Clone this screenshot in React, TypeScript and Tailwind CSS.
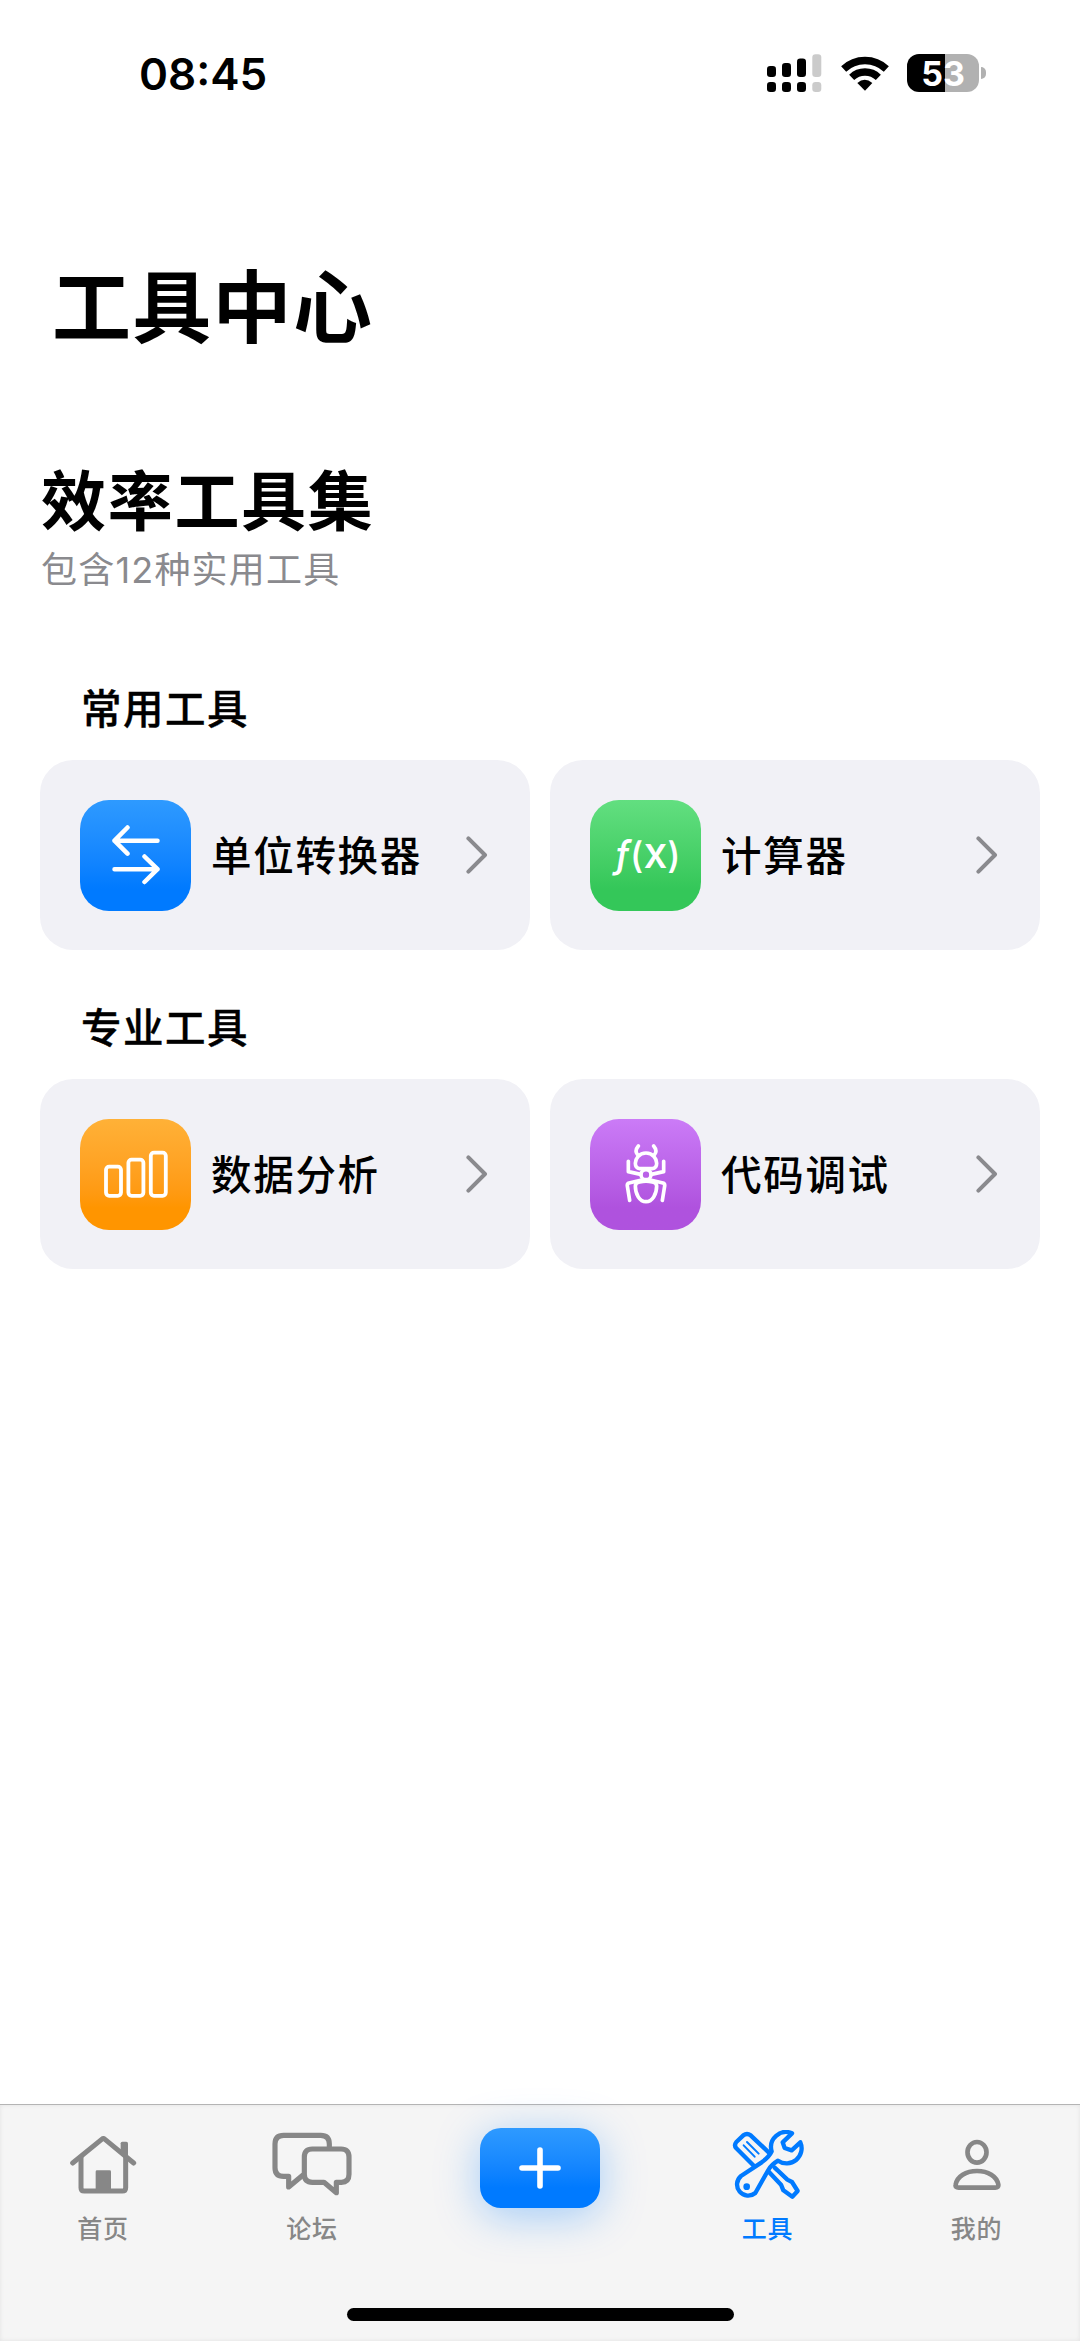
import type { ReactNode } from 'react';

type Tool = {
  name: string;
  tile: string;
  icon: ReactNode;
};

type Section = {
  title: string;
  tools: Tool[];
};

const SwapIcon = () => (
  <svg className="w-[50px] h-[60px]" viewBox="110 826 50 60" fill="none" stroke="white" strokeWidth={4.5} strokeLinecap="round" strokeLinejoin="round">
    <path d="M126.5 828.5 113.5 841.7 126.5 854.7M113.5 841.7H156.5" />
    <path d="M143.5 857.5 156.5 870.2 143.5 883M156.5 870.2H113.5" />
  </svg>
);

const FunctionIcon = () => (
  <span className="mt-[-5px] ml-[4px] flex items-baseline text-white text-[36px] leading-none font-medium">
    <span className="italic text-[38px]">ƒ</span>
    <span>(</span>
    <span className="text-[43px] leading-none">x</span>
    <span>)</span>
  </span>
);

const BarsIcon = () => (
  <svg className="w-[64px] h-[48px]" viewBox="104 1151 64 48" fill="none" stroke="white" strokeWidth={3.8}>
    <rect x="106" y="1167.6" width="15" height="29.2" rx="3.2" />
    <rect x="128.4" y="1160.6" width="15" height="36.2" rx="3.2" />
    <rect x="150.8" y="1153.6" width="15" height="43.2" rx="3.2" />
  </svg>
);

const AntIcon = () => (
  <svg className="w-[42px] h-[60px]" viewBox="253 254 126 180" fill="none" stroke="white" strokeWidth={11} strokeLinecap="round" strokeLinejoin="round">
    <path d="M293 260Q281 274 290 285M339 260Q351 274 342 285" />
    <path d="M316 281C295 281 284 298 284 312Q284 327 297 328H335Q348 327 348 312C348 298 337 281 316 281Z" />
    <circle cx="316" cy="346" r="15" />
    <path d="M284 380Q284 370 297 368Q316 363 335 368Q348 370 348 380C348 405 335 427 316 427C297 427 284 405 284 380Z" />
    <path d="M300 345 263 337V306M332 345 369 337V306" />
    <path d="M303 362 265 371Q259 373 260 380L267 423M329 362 367 371Q373 373 372 380L365 423" />
  </svg>
);

const ChevronIcon = () => (
  <svg className="w-[22px] h-[38px]" viewBox="0 0 22 38" fill="none" stroke="#8a8a8e" strokeWidth={4} strokeLinecap="round" strokeLinejoin="round">
    <path d="M2.4 2.4 19 19 2.4 35.6" />
  </svg>
);

const HomeIcon = () => (
  <svg className="w-[67px] h-[70px]" viewBox="210 120 201 210" fill="none" stroke="currentColor" strokeWidth={15} strokeLinecap="round" strokeLinejoin="round">
    <path d="M218 219 305 148Q310 144 315 148L401 219" />
    <path d="M243 202V293Q243 303 253 303H367Q377 303 377 293V202" />
    <path d="M362 190V160Q362 155 367 155H379Q384 155 384 160V205Z" fill="currentColor" stroke="none" />
    <rect x="287" y="241" width="46" height="62" rx="4" fill="currentColor" stroke="none" />
  </svg>
);

const ChatIcon = () => (
  <svg className="w-[80px] h-[70px]" viewBox="818 120 240 210" fill="none" stroke="currentColor" strokeWidth={15.5} strokeLinejoin="round">
    <path d="M990 171V162Q990 136 964 136H853Q827 136 827 162V233Q827 259 853 259H868V291L912 254" />
    <path d="M939 177H1025Q1049 177 1049 201V253Q1049 277 1026 277H1011V308L974 277H939Q915 277 915 253V201Q915 177 939 177Z" />
  </svg>
);

const ToolsIcon = () => (
  <svg className="w-[72px] h-[70px]" viewBox="96 120 216 210" fill="none" stroke="currentColor" strokeWidth={13} strokeLinecap="round" strokeLinejoin="round">
    <path d="M165 231 109 175Q101 166 109 156L130 136Q141 128 152 136L209 190" />
    <path d="M131 166 164 200M141 156 176 191" strokeWidth={6} />
    <path d="M207 246 243 284 250 301 277 320 293 303 276 276 262 269 224 233" />
    <path d="M228 250 258 281" stroke="#f5f5f5" strokeWidth={5} />
    {/* the wrench lies over the screwdriver */}
    <path
      d="M276 130A45 45 0 0 0 215 184Q208 200 185 217L123 258A31 31 0 1 0 166 309L205 240Q214 224 234 212A45 45 0 0 0 301 157L275 181 254 174 248 157Z"
      fill="#f5f5f5"
    />
    <circle cx="140" cy="290" r="10" fill="currentColor" stroke="none" />
  </svg>
);

const PersonIcon = () => (
  <svg className="w-[48px] h-[70px]" viewBox="758 120 144 210" fill="none" stroke="currentColor" strokeWidth={14} strokeLinejoin="round">
    <ellipse cx="830" cy="187" rx="28.5" ry="31" />
    <path d="M775 293Q764 293 766 284C770 259 797 243 830 243C863 243 890 259 894 284Q895 293 885 293Z" />
  </svg>
);

const SECTIONS: Section[] = [
  {
    title: '常用工具',
    tools: [
      { name: '单位转换器', tile: 'from-[#2e9aff] to-[#007aff]', icon: <SwapIcon /> },
      { name: '计算器', tile: 'from-[#62df80] to-[#34c759]', icon: <FunctionIcon /> },
    ],
  },
  {
    title: '专业工具',
    tools: [
      { name: '数据分析', tile: 'from-[#ffb137] to-[#ff9500]', icon: <BarsIcon /> },
      { name: '代码调试', tile: 'from-[#cb7bf7] to-[#af52de]', icon: <AntIcon /> },
    ],
  },
];

function StatusBar() {
  return (
    <div className="h-[146px] pt-[51px] pl-[139px] pr-[94px] flex items-start justify-between">
      <div className="text-[44px] leading-[46px] font-semibold">08:45</div>
      <div className="flex items-center h-[43px]">
        <svg className="w-[56px] h-[40px]" viewBox="766 52 56 40">
          <rect x="767" y="65" width="9" height="11" rx="3.2" />
          <rect x="782" y="62" width="9" height="14" rx="3.2" />
          <rect x="797" y="57.5" width="9" height="18.5" rx="3.2" />
          <rect x="812.3" y="53.3" width="9" height="22.7" rx="3.2" fill="#cbcbcb" />
          <rect x="767" y="81" width="9" height="10" rx="3.2" />
          <rect x="782" y="81" width="9" height="10" rx="3.2" />
          <rect x="797" y="81" width="9" height="10" rx="3.2" />
          <rect x="812.3" y="81" width="9" height="10" rx="3.2" fill="#cbcbcb" />
        </svg>
        <svg className="ml-[18px] w-[50px] h-[40px]" viewBox="299 66 150 120" fill="none" stroke="black" strokeWidth={22}>
          <path d="M310 114A93 93 0 0 1 438 114" />
          <path d="M334 139A58 58 0 0 1 414 139" />
          <path d="M351 156Q373 137 396 156L374 179Z" fill="black" stroke="none" />
        </svg>
        <div className="ml-[17px] w-[72px] h-[38px] pt-[2px] rounded-[12px] bg-[linear-gradient(90deg,#000_53%,#b1b1b1_53%)] flex items-center justify-center text-white text-[34px] leading-none font-bold">
          53
        </div>
        <div className="ml-[2px] w-[5px] h-[12px] rounded-r-full bg-[#b1b1b1]" />
      </div>
    </div>
  );
}

function ToolCard({ tool }: { tool: Tool }) {
  return (
    <div className="h-[190px] rounded-[33px] bg-[#f1f1f6] pl-10 pr-[42px] flex items-center">
      <div className={`size-[111px] rounded-[29px] bg-linear-to-b to-80% flex items-center justify-center ${tool.tile}`}>
        {tool.icon}
      </div>
      <div className="ml-[20px] mt-[3px] flex-1 text-[40.5px] leading-[56px] tracking-[1.7px] font-medium whitespace-nowrap">{tool.name}</div>
      <ChevronIcon />
    </div>
  );
}

function TabItem({ label, active, children }: { label: string; active?: boolean; children: ReactNode }) {
  return (
    <div className={`flex flex-col items-center pt-[25px] ${active ? 'text-[#007aff]' : 'text-[#878787]'}`}>
      {children}
      <span className="mt-[11px] text-[25px] leading-[36px] tracking-[0.8px] font-medium">{label}</span>
    </div>
  );
}

export default function App() {
  return (
    <div className="w-[1080px] h-[2341px] flex flex-col bg-white text-black font-['Inter','Noto_Sans_CJK_SC',sans-serif]">
      <StatusBar />

      <main className="flex-1 px-10">
        <h1 className="mt-[104px] pl-[12px] text-[79px] leading-[116px] tracking-[1.3px] font-bold">工具中心</h1>
        <h2 className="mt-[88px] pl-px text-[65px] leading-[96px] tracking-[1.7px] font-bold">效率工具集</h2>
        <p className="mt-[-6px] pl-px text-[36px] leading-[52px] tracking-[1.2px] text-[#8a8a8e]">包含12种实用工具</p>

        <div className="mt-[86px] flex flex-col gap-[51px]">
          {SECTIONS.map((section) => (
            <section key={section.title}>
              <h3 className="pl-[41px] text-[40.5px] leading-[56px] tracking-[1.5px] font-medium [-webkit-text-stroke:0.4px_black]">
                {section.title}
              </h3>
              <div className="mt-[22px] grid grid-cols-2 gap-5">
                {section.tools.map((tool) => (
                  <ToolCard key={tool.name} tool={tool} />
                ))}
              </div>
            </section>
          ))}
        </div>
      </main>

      <nav className="h-[237px] border-t border-[#b4b4b4] bg-[#f5f5f5] shadow-[inset_0_0_4px_#e2e2e2] flex flex-col items-center justify-between pb-5">
        <div className="w-full grid grid-cols-[206px_212px_244px_211px_207px]">
          <TabItem label="首页">
            <HomeIcon />
          </TabItem>
          <TabItem label="论坛">
            <ChatIcon />
          </TabItem>
          <div className="pt-[23px] flex justify-center">
            <button className="w-[120px] h-[80px] rounded-[21px] bg-linear-to-b from-[#2e9aff] to-[#007aff] to-75% shadow-[0_8px_44px_rgba(0,122,255,0.34)] flex items-center justify-center">
              <svg className="w-[42px] h-[42px]" viewBox="0 0 42 42" stroke="white" strokeWidth={5.6} strokeLinecap="round">
                <path d="M21 3V39M3 21H39" />
              </svg>
            </button>
          </div>
          <TabItem label="工具" active>
            <ToolsIcon />
          </TabItem>
          <TabItem label="我的">
            <PersonIcon />
          </TabItem>
        </div>
        <div className="w-[387px] h-[13px] rounded-full bg-black" />
      </nav>
    </div>
  );
}
